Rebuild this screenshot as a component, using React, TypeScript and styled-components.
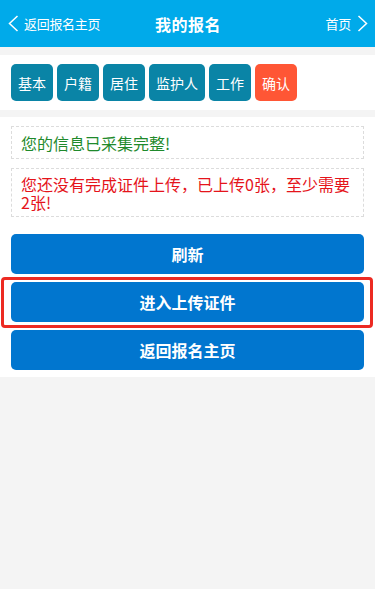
import React from "react";
import styled, { createGlobalStyle } from "styled-components";

const Global = createGlobalStyle`
  html, body { margin: 0; padding: 0; background: #f4f4f4; }
  body { font-family: "Noto Sans CJK SC", "Noto Sans", sans-serif; }
  * { box-sizing: border-box; }
`;

const Page = styled.div`
  width: 375px;
  min-height: 589px;
  background: #f4f4f4;
`;

const Header = styled.header`
  height: 47px;
  background: #00aaea;
  display: grid;
  grid-template-columns: 1fr auto 1fr;
  align-items: center;
  padding: 0 7px 0 8px;
  color: #fff;
`;

const NavLink = styled.div<{ $right?: boolean }>`
  display: flex;
  align-items: center;
  justify-content: ${(p) => (p.$right ? "flex-end" : "flex-start")};
  gap: ${(p) => (p.$right ? "6px" : "5px")};
  font-size: 13px;
  line-height: 16px;
  letter-spacing: -0.3px;
`;

const Title = styled.h1`
  margin: 0;
  font-size: 16px;
  font-weight: 700;
  line-height: 20px;
  letter-spacing: 0.5px;
  margin-top: 1px;
`;

const Section = styled.section<{ $top: number; $pb: number; $pt: number }>`
  background: #fff;
  margin-top: ${(p) => p.$top}px;
  padding: ${(p) => p.$pt}px 11px ${(p) => p.$pb}px;
`;

const Tabs = styled.nav`
  display: flex;
  gap: 4px;
`;

const Tab = styled.div<{ $active?: boolean }>`
  height: 37px;
  padding: 0 7px;
  border-radius: 5px;
  background: ${(p) => (p.$active ? "#ff5635" : "#0a84a6")};
  color: #fff;
  font-size: 14px;
  display: flex;
  align-items: center;
  line-height: 1;
`;

const Notice = styled.div<{ $color: string; $mb: number; $pad: string }>`
  border: 1px dashed #dcdcdc;
  padding: ${(p) => p.$pad};
  color: ${(p) => p.$color};
  font-size: 16px;
  line-height: 18px;
  margin-bottom: ${(p) => p.$mb}px;
`;

const Buttons = styled.div`
  display: flex;
  flex-direction: column;
  gap: 8px;
`;

const Button = styled.button<{ $marked?: boolean }>`
  position: relative;
  height: 40px;
  width: 100%;
  border: none;
  border-radius: 5px;
  background: #0176cf;
  color: #fff;
  font-family: "Noto Sans CJK SC", "Noto Sans", sans-serif;
  font-size: 16px;
  font-weight: 700;
  padding: 0;
  ${(p) =>
    p.$marked &&
    `
    &::after {
      content: "";
      position: absolute;
      top: -5px;
      bottom: -6px;
      left: -10px;
      right: -9px;
      border: 3px solid #ec2a22;
      border-radius: 4px;
      pointer-events: none;
    }
  `}
`;

const Chevron = ({ dir }: { dir: "left" | "right" }) => (
  <svg width="11" height="17" viewBox="0 0 11 17" fill="none">
    <polyline
      points={dir === "left" ? "9.5,1 1.5,8.5 9.5,16" : "1.5,1 9.5,8.5 1.5,16"}
      stroke="#fff"
      strokeWidth="1.5"
      strokeLinejoin="miter"
    />
  </svg>
);

export default function App() {
  const tabs = ["基本", "户籍", "居住", "监护人", "工作", "确认"];
  return (
    <Page>
      <Global />
      <Header>
        <NavLink>
          <Chevron dir="left" />
          <span>返回报名主页</span>
        </NavLink>
        <Title>我的报名</Title>
        <NavLink $right>
          <span>首页</span>
          <Chevron dir="right" />
        </NavLink>
      </Header>
      <Section $top={8} $pt={9} $pb={9}>
        <Tabs>
          {tabs.map((t, i) => (
            <Tab key={t} $active={i === tabs.length - 1}>
              {t}
            </Tab>
          ))}
        </Tabs>
      </Section>
      <Section $top={7} $pt={9} $pb={7}>
        <Notice $color="#1f8a2c" $mb={9} $pad="7px 9px 6px">
          您的信息已采集完整!
        </Notice>
        <Notice $color="#e5141b" $mb={17} $pad="6px 9px 5px">
          您还没有完成证件上传，已上传0张，至少需要2张!
        </Notice>
        <Buttons>
          <Button>刷新</Button>
          <Button $marked>进入上传证件</Button>
          <Button>返回报名主页</Button>
        </Buttons>
      </Section>
    </Page>
  );
}
